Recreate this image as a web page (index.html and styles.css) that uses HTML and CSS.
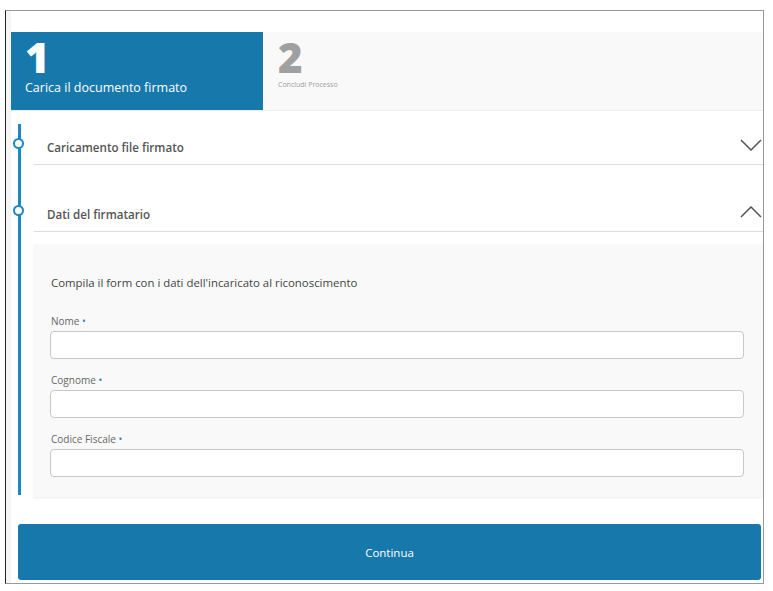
FILE: index.html
```html
<!DOCTYPE html>
<html lang="it">

<head>
    <meta charset="UTF-8">
    <meta name="viewport" content="width=device-width, initial-scale=1.0">
    <title>Carica il documento firmato</title>
    <link rel="stylesheet" href="styles.css">
</head>

<body>
    <div class="frame">
        <div class="content">
            <div class="steps">
                <div class="step active">
                    <div class="step-num">1</div>
                    <div class="step-label">Carica il documento firmato</div>
                </div>
                <div class="step">
                    <div class="step-num">2</div>
                    <div class="step-label">Concludi Processo</div>
                </div>
            </div>

            <div class="timeline">
                <div class="section">
                    <div class="marker"><span class="dot"></span></div>
                    <div class="section-body">
                        <div class="section-head">
                            <span class="section-title">Caricamento file firmato</span>
                            <svg class="chevron" width="22" height="12" viewBox="0 0 22 12">
                                <polyline points="1,1 11,11 21,1" fill="none" stroke="#555" stroke-width="1.5" />
                            </svg>
                        </div>
                    </div>
                </div>

                <div class="section second">
                    <div class="marker"><span class="dot"></span></div>
                    <div class="section-body">
                        <div class="section-head">
                            <span class="section-title">Dati del firmatario</span>
                            <svg class="chevron" width="22" height="12" viewBox="0 0 22 12">
                                <polyline points="1,11 11,1 21,11" fill="none" stroke="#555" stroke-width="1.5" />
                            </svg>
                        </div>

                        <div class="panel">
                            <p class="intro">Compila il form con i dati dell'incaricato al riconoscimento</p>

                            <div class="field">
                                <label for="nome">Nome <span class="req">•</span></label>
                                <input type="text" id="nome">
                            </div>
                            <div class="field">
                                <label for="cognome">Cognome <span class="req">•</span></label>
                                <input type="text" id="cognome">
                            </div>
                            <div class="field">
                                <label for="cf">Codice Fiscale <span class="req">•</span></label>
                                <input type="text" id="cf">
                            </div>
                        </div>
                    </div>
                </div>
            </div>

            <button class="btn-continue">Continua</button>
        </div>
    </div>
</body>

</html>
```

FILE: styles.css
```css
body {
    margin: 0;
    font-family: 'Open Sans', 'Noto Sans', Arial, sans-serif;
    background-color: white;
    color: #444;
}

.frame {
    margin: 10px 0 0 5px;
    width: 757px;
    height: 572px;
    border: 1px solid #999;
    border-left-color: #222;
    background-color: white;
}

.content {
    height: 100%;
    border-left: 5px solid #f5f5f5;
    padding-top: 21px;
    box-sizing: border-box;
}

.steps {
    display: flex;
    height: 79px;
    background-color: #f9f9f9;
    border-bottom: 1px solid #eee;
    box-sizing: border-box;
}

.step {
    flex: 1;
    padding: 5px 15px 0;
    color: #a0a0a0;
}

.step.active {
    flex: 0 0 252px;
    box-sizing: border-box;
    padding-left: 14px;
    background-color: #1779ab;
    color: white;
}

.step-num {
    font-size: 42px;
    font-weight: 800;
    line-height: 40px;
}

.step-label {
    font-size: 7px;
    line-height: 12px;
    margin-top: 2px;
}

.step.active .step-label {
    font-size: 12.5px;
    line-height: 17px;
}

.timeline {
    padding-top: 19px;
    background: linear-gradient(#1c87c0, #1c87c0) no-repeat 7px 13px / 3px calc(100% - 15px);
}

.section {
    display: flex;
}

.section.second {
    margin-top: 32px;
}

.marker {
    flex: 0 0 23px;
}

.dot {
    display: block;
    width: 7px;
    height: 7px;
    margin: 8px 0 0 2px;
    border: 2px solid #1c87c0;
    border-radius: 50%;
    background-color: white;
}

.section-body {
    flex: 1;
}

.section-head {
    display: flex;
    align-items: center;
    justify-content: space-between;
    height: 34px;
    padding: 0 1px 0 13px;
    border-bottom: 1px solid #ddd;
}

.section-title {
    font-size: 11.6px;
    font-weight: 600;
    color: #555;
    margin-top: 1px;
}

.chevron {
    margin-bottom: 4px;
}

.panel {
    margin-top: 12px;
    padding: 30px 18px 20px 17px;
    background-color: #f9f9f9;
    box-shadow: 0 1px 2px rgba(0, 0, 0, 0.08);
}

.intro {
    margin: 0 0 22px;
    font-size: 11.4px;
    line-height: 18px;
    color: #444;
}

.field {
    margin-bottom: 14px;
}

.field:last-child {
    margin-bottom: 0;
}

.field label {
    display: block;
    font-size: 10px;
    line-height: 15px;
    color: #666;
    margin-bottom: 2px;
}

.req {
    color: #1f7fd0;
}

.field input {
    display: block;
    width: 100%;
    height: 28px;
    box-sizing: border-box;
    border: 1px solid #c8c8c8;
    border-radius: 4px;
    background-color: white;
    margin-left: -1px;
}

.btn-continue {
    display: block;
    width: 743px;
    height: 56px;
    margin: 27px 0 0 7px;
    border: none;
    border-radius: 3px;
    background-color: #1779ab;
    color: white;
    font-family: inherit;
    font-size: 11.5px;
}
```
